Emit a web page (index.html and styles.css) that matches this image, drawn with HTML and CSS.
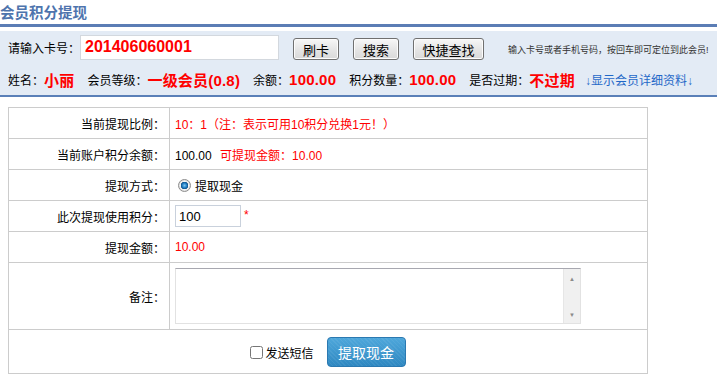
FILE: index.html
```html
<!DOCTYPE html>
<html>
<head>
    <meta charset="utf-8">
    <title>会员积分提现</title>
    <link rel="stylesheet" href="styles.css">
</head>
<body>
    <div class="page-title">会员积分提现</div>

    <div class="member-bar">
        <div class="search-row">
            <span class="card-label">请输入卡号：</span>
            <input class="card-input" type="text" value="201406060001">
            <button class="gray-btn">刷卡</button>
            <button class="gray-btn">搜索</button>
            <button class="gray-btn wide">快捷查找</button>
            <span class="hint">输入卡号或者手机号码，按回车即可定位到此会员!</span>
        </div>
        <div class="info-row">
            <span class="info-label">姓名：</span><span class="info-value">小丽</span>
            <span class="info-label">会员等级：</span><span class="info-value">一级会员(0.8)</span>
            <span class="info-label">余额：</span><span class="info-value">100.00</span>
            <span class="info-label">积分数量：</span><span class="info-value">100.00</span>
            <span class="info-label">是否过期：</span><span class="info-value big">不过期</span>
            <a class="detail-link" href="#">↓显示会员详细资料↓</a>
        </div>
    </div>

    <table class="form-table">
        <tr>
            <td class="label">当前提现比例：</td>
            <td class="red">10：1（注：表示可用10积分兑换1元！）</td>
        </tr>
        <tr>
            <td class="label">当前账户积分余额：</td>
            <td>100.00 <span class="red gap">可提现金额：10.00</span></td>
        </tr>
        <tr>
            <td class="label">提现方式：</td>
            <td><label class="radio"><input type="radio" name="way" checked>提取现金</label></td>
        </tr>
        <tr>
            <td class="label">此次提现使用积分：</td>
            <td><input class="points-input" type="text" value="100"><span class="star">*</span></td>
        </tr>
        <tr>
            <td class="label">提现金额：</td>
            <td class="red">10.00</td>
        </tr>
        <tr class="note-row">
            <td class="label">备注：</td>
            <td>
                <div class="note-box">
                    <textarea class="note"></textarea>
                    <div class="scrollbar">
                        <span class="arrow">▲</span>
                        <span class="arrow">▼</span>
                    </div>
                </div>
            </td>
        </tr>
        <tr class="action-row">
            <td colspan="2">
                <div class="actions">
                    <label class="check"><input type="checkbox">发送短信</label>
                    <button class="blue-btn">提取现金</button>
                </div>
            </td>
        </tr>
    </table>
</body>
</html>
```

FILE: styles.css
```css
body {
    margin: 0;
    font-family: "Liberation Sans", "Noto Sans CJK SC", sans-serif;
    font-size: 12px;
    color: #000;
    background: #fff;
}
.page-title {
    height: 22px;
    padding-top: 2px;
    line-height: 22px;
    font-size: 14.5px;
    font-weight: bold;
    color: #4e74ad;
    border-bottom: 3px solid #5b7db5;
}
.member-bar {
    margin-top: 4px;
    height: 64px;
    padding-left: 8px;
    background: #e3ebf5;
    border-bottom: 2px solid #5a80b8;
}
.search-row {
    display: flex;
    align-items: center;
    padding-top: 3px;
    height: 26px;
}
.card-label {
    width: 72px;
}
.card-input {
    box-sizing: border-box;
    width: 199px;
    height: 25px;
    margin: 0 14px 0 0;
    padding: 0 4px;
    border: 1px solid #d3d8de;
    font-family: "Liberation Sans", sans-serif;
    font-size: 16px;
    font-weight: bold;
    color: #f00;
    outline: none;
}
.gray-btn {
    box-sizing: border-box;
    width: 46px;
    height: 22px;
    margin: 4px 14px 0 0;
    padding: 0;
    border: 1px solid #707070;
    border-radius: 3px;
    background: linear-gradient(#f7f7f7, #e6e6e6 50%, #d9d9d9);
    box-shadow: inset 0 0 0 1px #fcfcfc;
    font-family: "Noto Sans CJK SC", sans-serif;
    font-size: 13px;
    color: #000;
}
.gray-btn.wide {
    width: 71px;
    margin-right: 24px;
}
.hint {
    margin-top: 4px;
    font-size: 9px;
    color: #333;
}
.info-row {
    display: flex;
    align-items: center;
    margin-top: 7px;
    height: 24px;
}
.info-label {
    margin-left: 13px;
}
.info-label:first-child {
    margin-left: 0;
}
.info-value {
    font-size: 15px;
    font-weight: bold;
    letter-spacing: 0.2px;
    color: #f00;
}
.info-value.big {
    font-size: 15px;
}
.detail-link {
    margin-left: 10px;
    color: #1f68c8;
    text-decoration: none;
}
.form-table {
    margin: 10px 0 0 8px;
    width: 640px;
    border-collapse: collapse;
}
.form-table td {
    height: 30px;
    padding: 0 0 0 5px;
    border: 1px solid #cccccc;
    vertical-align: middle;
}
.form-table td.label {
    width: 156px;
    padding: 0 4px 0 0;
    text-align: right;
}
.red {
    color: #f00;
}
.gap {
    margin-left: 5px;
}
.radio {
    display: flex;
    align-items: center;
}
.radio input {
    appearance: none;
    box-sizing: border-box;
    width: 13px;
    height: 13px;
    margin: 0 4px 0 3px;
    border: 1px solid #8f8f8f;
    border-radius: 50%;
    background: radial-gradient(circle, #7cc4f0 0, #1a78be 2.5px, #0d4f86 3.5px, #f4f4f4 4px, #d8d8d8 6px);
}
.points-input {
    box-sizing: border-box;
    width: 66px;
    height: 22px;
    margin: 0;
    padding: 0 3px;
    border: 1px solid #c9d1dc;
    font-family: "Liberation Sans", sans-serif;
    font-size: 13px;
    vertical-align: middle;
}
.star {
    margin-left: 3px;
    color: #f00;
}
.note-row td {
    height: 66px;
}
.note-box {
    display: flex;
    box-sizing: border-box;
    width: 406px;
    height: 56px;
    border: 1px solid #e2e2e2;
    border-top-color: #a8a8b0;
}
.note {
    flex: 1;
    margin: 0;
    border: none;
    resize: none;
    outline: none;
}
.scrollbar {
    display: flex;
    flex-direction: column;
    justify-content: space-between;
    align-items: center;
    width: 16px;
    padding: 6px 0 4px;
    background: #f0f0f0;
    border-left: 1px solid #e6e6e6;
}
.arrow {
    font-size: 6px;
    line-height: 8px;
    color: #8a8a8a;
}
.action-row td {
    height: 43px;
    padding: 0;
}
.actions {
    display: flex;
    align-items: center;
    justify-content: center;
    gap: 13px;
}
.check {
    display: flex;
    align-items: center;
    margin-top: 1px;
}
.check input {
    width: 13px;
    height: 13px;
    margin: 0 2px 0 0;
}
.blue-btn {
    box-sizing: border-box;
    width: 79px;
    height: 30px;
    border: 1px solid #2b79b1;
    border-radius: 4px;
    background: repeating-linear-gradient(45deg, rgba(255,255,255,0.06) 0 1px, transparent 1px 3px), linear-gradient(#4ea7db, #2f88c1);
    font-family: "Noto Sans CJK SC", sans-serif;
    font-size: 14px;
    color: #fff;
}
```
